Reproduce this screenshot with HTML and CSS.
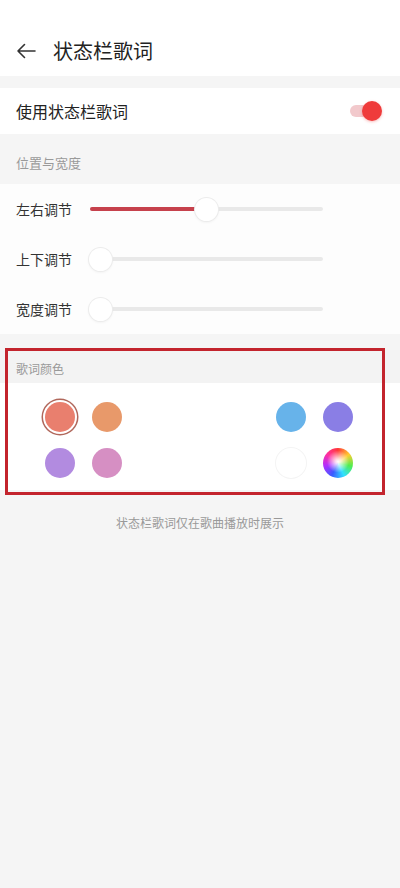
FILE: index.html
```html
<!DOCTYPE html>
<html lang="zh">
<head>
<meta charset="utf-8">
<meta name="viewport" content="width=device-width, initial-scale=1">
<title>状态栏歌词</title>
<link rel="stylesheet" href="styles.css">
</head>
<body>
<div class="page">
  <header class="topbar">
    <svg class="back" width="20" height="16" viewBox="0 0 20 16"><path d="M19 8H2M8.5 1.5L2 8l6.5 6.5" fill="none" stroke="#333" stroke-width="1.6" stroke-linecap="round" stroke-linejoin="round"/></svg>
    <h1 class="title">状态栏歌词</h1>
  </header>

  <div class="row switch-row">
    <span class="row-label">使用状态栏歌词</span>
    <span class="toggle"><span class="toggle-track"></span><span class="toggle-thumb"></span></span>
  </div>

  <div class="section-head">位置与宽度</div>
  <div class="sliders">
    <div class="slider-row">
      <span class="slider-label">左右调节</span>
      <div class="slider"><div class="slider-fill" style="width:47%"></div><div class="slider-thumb" style="left:50%"></div></div>
    </div>
    <div class="slider-row">
      <span class="slider-label">上下调节</span>
      <div class="slider"><div class="slider-thumb" style="left:4.5%"></div></div>
    </div>
    <div class="slider-row">
      <span class="slider-label">宽度调节</span>
      <div class="slider"><div class="slider-thumb" style="left:4.5%"></div></div>
    </div>
  </div>

  <div class="color-section">
    <div class="color-head">歌词颜色</div>
    <div class="swatches">
      <div class="swatch-row">
        <div class="group">
          <span class="swatch selected c-coral"></span>
          <span class="swatch c-orange"></span>
        </div>
        <div class="group">
          <span class="swatch c-blue"></span>
          <span class="swatch c-purple"></span>
        </div>
      </div>
      <div class="swatch-row">
        <div class="group">
          <span class="swatch c-lavender"></span>
          <span class="swatch c-pink"></span>
        </div>
        <div class="group">
          <span class="swatch c-white"></span>
          <span class="swatch c-rainbow"></span>
        </div>
      </div>
    </div>
    <div class="annotation"></div>
  </div>

  <p class="caption">状态栏歌词仅在歌曲播放时展示</p>
</div>
</body>
</html>
```
FILE: styles.css
```css
* { box-sizing: border-box; }
html, body { margin: 0; padding: 0; }
body {
  background: #f5f5f5;
  font-family: "Noto Sans CJK SC", "Noto Sans", sans-serif;
  color: #222;
}
.page { width: 400px; min-height: 888px; }

.topbar {
  height: 76px;
  background: #fff;
  display: flex;
  align-items: center;
  padding: 26px 0 0 16px;
}
.back { display: block; margin-right: 17px; }
.title {
  margin: 0;
  font-size: 20px;
  font-weight: 400;
  color: #222;
  line-height: 26px;
}

.row {
  margin-top: 12px;
  height: 46px;
  background: #fff;
  display: flex;
  align-items: center;
  justify-content: space-between;
  padding: 0 18px 0 16px;
}
.row-label { font-size: 16px; color: #222; }
.toggle { position: relative; width: 32px; height: 20px; display: block; }
.toggle-track {
  position: absolute; left: 0; top: 4px;
  width: 28px; height: 12px; border-radius: 6px;
  background: #f2c9cc;
}
.toggle-thumb {
  position: absolute; right: 0; top: 0;
  width: 20px; height: 20px; border-radius: 50%;
  background: #ef3b3b;
  box-shadow: 0 1px 3px rgba(239, 59, 59, 0.35);
}

.section-head {
  height: 50px;
  padding: 20px 16px 0;
  font-size: 13px;
  line-height: 18px;
  color: #9a9a9a;
}

.sliders { background: #fdfdfd; padding: 0; }
.slider-row {
  height: 50px;
  display: flex;
  align-items: center;
  padding-left: 16px;
}
.slider-label { width: 74px; font-size: 14px; color: #333; }
.slider {
  position: relative;
  width: 233px;
  height: 4px;
  border-radius: 2px;
  background: #e9e9e9;
}
.slider-fill {
  position: absolute; left: 0; top: 0; bottom: 0;
  border-radius: 2px;
  background: #c6414c;
}
.slider-thumb {
  position: absolute; top: 50%;
  width: 23px; height: 23px;
  margin: -11.5px 0 0 -11.5px;
  border-radius: 50%;
  background: #fff;
  box-shadow: 0 0 0 1px #ececec, 0 1px 3px rgba(0,0,0,0.08);
}

.color-section { position: relative; margin-top: 16px; }
.color-head {
  height: 33px;
  background: #f3f3f3;
  padding: 10px 16px 0;
  font-size: 12px;
  line-height: 18px;
  color: #999;
}
.swatches {
  background: #fff;
  padding: 19px 47px 12px 45px;
  display: flex;
  flex-direction: column;
  gap: 16px;
}
.swatch-row { display: flex; justify-content: space-between; }
.group { display: flex; gap: 17px; }
.swatch {
  display: block;
  width: 30px; height: 30px;
  border-radius: 50%;
}
.c-coral { background: #e97f6e; }
.swatch.selected {
  box-shadow: 0 0 0 2px #fff, 0 0 0 3.5px #b0675b;
}
.c-orange { background: #e8996a; }
.c-blue { background: #67b3ea; }
.c-purple { background: #8a7ee5; }
.c-lavender { background: #b28be0; }
.c-pink { background: #d68fc3; }
.c-white { background: #fff; box-shadow: 0 0 0 1px #f4f4f4; }
.c-rainbow {
  background:
    radial-gradient(circle at 50% 45%, #fff 0%, rgba(255,255,255,0.8) 12%, rgba(255,255,255,0) 50%),
    conic-gradient(from 0deg, #ff3838, #ffcc30, #50ee50, #30e0ff, #3a5cff, #b030ff, #ff30a0, #ff3838);
}

.annotation {
  position: absolute;
  left: 5px; top: -2px;
  width: 380px; height: 147px;
  border: 3px solid #c3242d;
  pointer-events: none;
}

.caption {
  margin: 24px 0 0;
  text-align: center;
  font-size: 12px;
  line-height: 18px;
  color: #999;
}
```
